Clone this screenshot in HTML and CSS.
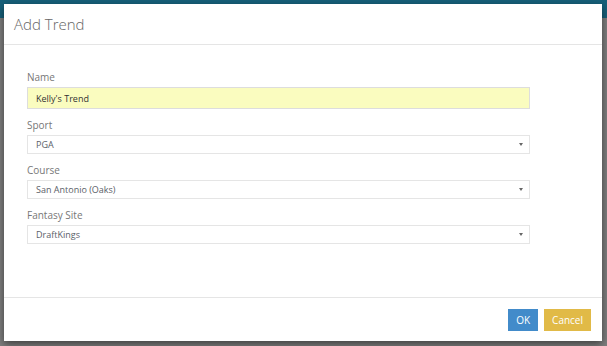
FILE: index.html
```html
<!DOCTYPE html>
<html>

<head>
    <title>Add Trend</title>
    <link rel="stylesheet" href="styles.css">
</head>

<body>
    <div class="page">
        <div class="topbar"></div>
        <div class="page-body"></div>
    </div>

    <div class="modal">
        <div class="modal-header">
            <h4 class="modal-title">Add Trend</h4>
        </div>

        <div class="modal-body">
            <div class="form-group">
                <label class="label" for="name">Name</label>
                <input type="text" id="name" class="input input-name" value="Kelly's Trend">
            </div>

            <div class="form-group">
                <label class="label">Sport</label>
                <div class="select">PGA<span class="caret"></span></div>
            </div>

            <div class="form-group">
                <label class="label">Course</label>
                <div class="select">San Antonio (Oaks)<span class="caret"></span></div>
            </div>

            <div class="form-group">
                <label class="label">Fantasy Site</label>
                <div class="select">DraftKings<span class="caret"></span></div>
            </div>
        </div>

        <div class="modal-footer">
            <button class="btn btn-ok" type="button">OK</button>
            <button class="btn btn-cancel" type="button">Cancel</button>
        </div>
    </div>
</body>

</html>
```

FILE: styles.css
```css
body {
    margin: 0;
    font-family: "Open Sans", "Liberation Sans", sans-serif;
    background-color: #808080;
}

.page {
    height: 346px;
    display: flex;
    flex-direction: column;
}

.topbar {
    height: 18px;
    background-color: #17607a;
}

.page-body {
    flex: 1;
    background-color: #7e7e7e;
}

.modal {
    position: absolute;
    left: 4px;
    top: 4px;
    width: 598px;
    background-color: #ffffff;
    box-shadow: 0 3px 8px rgba(0, 0, 0, 0.5);
}

.modal-header {
    height: 40px;
    padding-left: 10px;
    display: flex;
    align-items: center;
    border-bottom: 1px solid #e5e5e5;
}

.modal-title {
    margin: 0;
    font-size: 15px;
    font-weight: 300;
    color: #666666;
}

.modal-body {
    padding: 25px 0 0 23px;
    height: 227px;
}

.form-group {
    width: 503px;
    margin-bottom: 9px;
}

.label {
    display: block;
    height: 14px;
    line-height: 14px;
    margin-bottom: 3px;
    font-size: 10px;
    color: #777777;
}

.input {
    display: block;
    box-sizing: border-box;
    width: 100%;
    height: 22px;
    margin: 0;
    padding: 0 8px;
    font-family: inherit;
    font-size: 9px;
    color: #333333;
    background-color: #fafcbf;
    border: 1px solid #dddddd;
    outline: none;
}

.select {
    position: relative;
    box-sizing: border-box;
    height: 19px;
    line-height: 17px;
    padding: 0 8px;
    font-size: 9px;
    color: #5a6068;
    border: 1px solid #e5e5e5;
}

.caret {
    position: absolute;
    right: 6px;
    top: 7px;
    width: 0;
    height: 0;
    border-left: 2px solid transparent;
    border-right: 2px solid transparent;
    border-top: 3px solid #666666;
}

.modal-footer {
    height: 43px;
    padding-right: 11px;
    display: flex;
    justify-content: flex-end;
    align-items: flex-start;
    gap: 6px;
    border-top: 1px solid #e5e5e5;
}

.btn {
    margin-top: 11px;
    height: 22px;
    padding: 0 8px;
    font-family: inherit;
    font-size: 10px;
    color: #ffffff;
    border: none;
    cursor: pointer;
}

.btn-ok {
    background-color: #428bca;
}

.btn-cancel {
    background-color: #e1ba47;
}
```
